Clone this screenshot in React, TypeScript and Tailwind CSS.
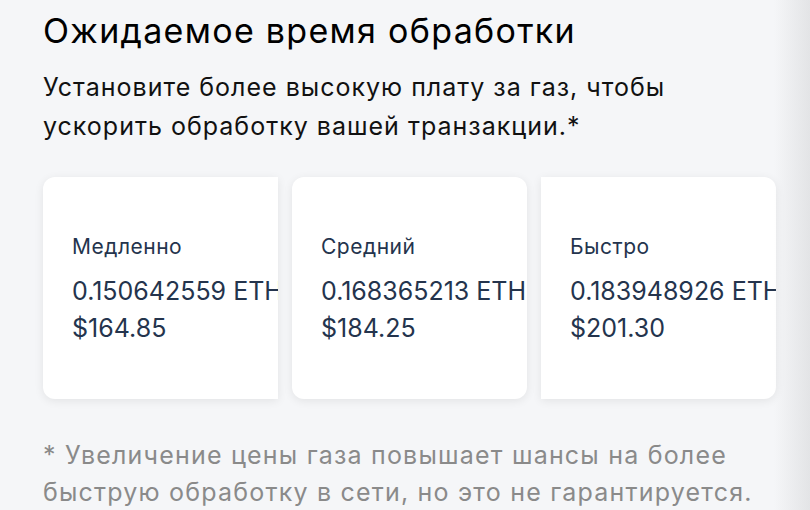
import React from "react";

type GasOption = {
    label: string;
    eth: string;
    usd: string;
    shape: string;
};

const options: GasOption[] = [
    { label: "Медленно", eth: "0.150642559 ETH", usd: "$164.85", shape: "rounded-l-xl" },
    { label: "Средний", eth: "0.168365213 ETH", usd: "$184.25", shape: "rounded-xl" },
    { label: "Быстро", eth: "0.183948926 ETH", usd: "$201.30", shape: "rounded-r-xl" }
];

function GasCard({ option }: { option: GasOption }) {
    return (
        <div
            className={`flex h-[222px] w-[235px] shrink-0 flex-col justify-center overflow-hidden bg-white pl-[29px] text-[#24344d] shadow-[0_2px_10px_rgba(0,0,0,0.08)] ${option.shape}`}
        >
            <div className="text-[21px] leading-[28px] tracking-[0.5px]">{option.label}</div>
            <div className="mt-[14px] whitespace-nowrap text-[25px] leading-[32px]">{option.eth}</div>
            <div className="mt-[5px] whitespace-nowrap text-[25px] leading-[32px]">{option.usd}</div>
        </div>
    );
}

export default function App() {
    return (
        <div className="relative h-[510px] w-[810px] overflow-hidden bg-[#f5f6f8] font-['Inter',sans-serif]">
            <div className="flex flex-col pl-[43px] pt-[9px]">
                <h1 className="text-[34px] leading-[44px] tracking-[1.3px] text-black">Ожидаемое время обработки</h1>
                <p className="mt-[15px] w-[680px] text-[25px] leading-[39px] tracking-[1px] text-[#111]">
                    Установите более высокую плату за газ, чтобы ускорить обработку вашей транзакции.*
                </p>
                <div className="mt-[31px] flex gap-[14px]">
                    {options.map((option) => (
                        <GasCard key={option.label} option={option} />
                    ))}
                </div>
                <p className="mt-[38px] w-[740px] text-[25px] leading-[37px] tracking-[1.2px] text-[#8a8a8a]">
                    * Увеличение цены газа повышает шансы на более быструю обработку в сети, но это не
                    гарантируется.
                </p>
            </div>
            {/* right edge fade */}
            <div className="pointer-events-none absolute right-0 top-0 h-full w-[36px] bg-gradient-to-r from-transparent to-[#e3e4e6]" />
        </div>
    );
}
